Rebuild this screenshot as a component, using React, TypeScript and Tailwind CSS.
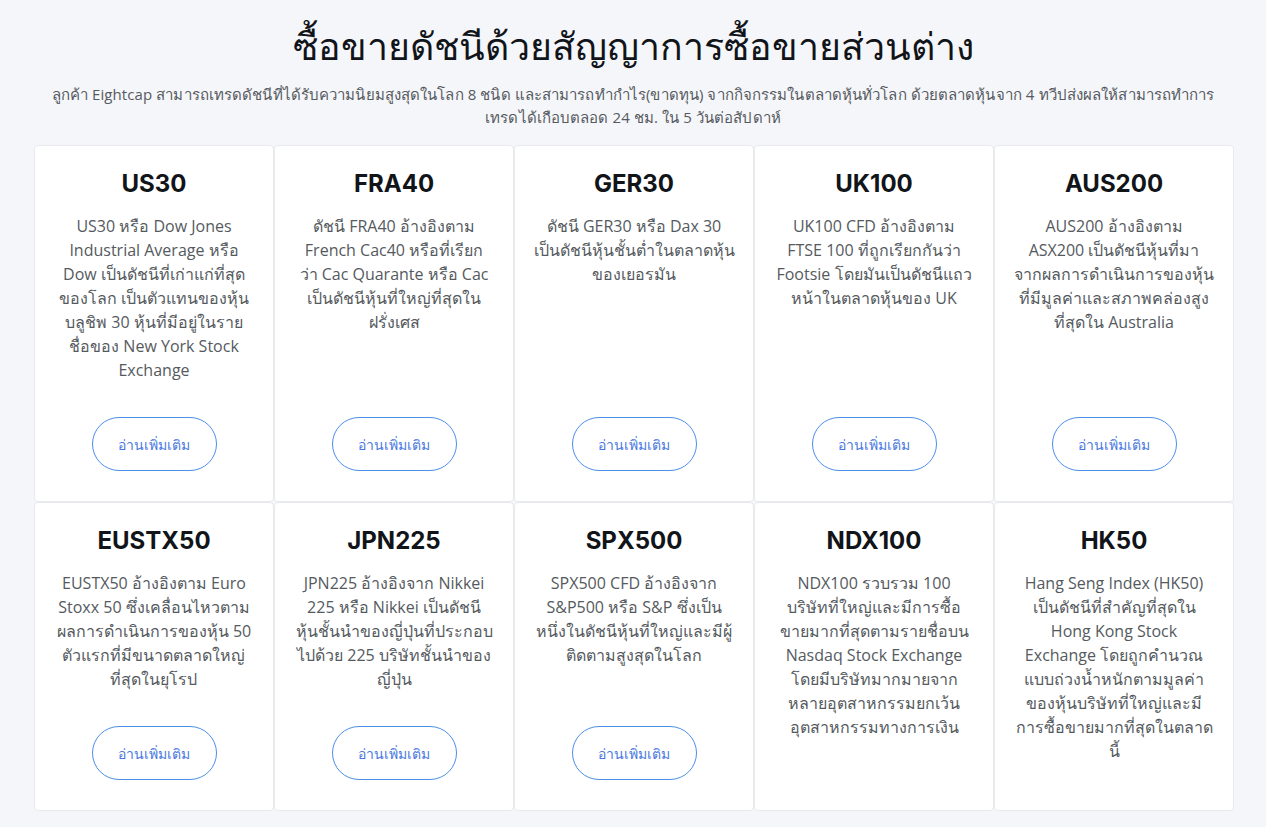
const indices = [
  {
    name: "US30",
    lines: [
      "US30 หรือ Dow Jones",
      "Industrial Average หรือ",
      "Dow เป็นดัชนีที่เก่าแก่ที่สุด",
      "ของโลก เป็นตัวแทนของหุ้น",
      "บลูชิพ 30 หุ้นที่มีอยู่ในราย",
      "ชื่อของ New York Stock",
      "Exchange",
    ],
    button: true,
  },
  {
    name: "FRA40",
    lines: [
      "ดัชนี FRA40 อ้างอิงตาม",
      "French Cac40 หรือที่เรียก",
      "ว่า Cac Quarante หรือ Cac",
      "เป็นดัชนีหุ้นที่ใหญ่ที่สุดใน",
      "ฝรั่งเศส",
    ],
    button: true,
  },
  {
    name: "GER30",
    lines: ["ดัชนี GER30 หรือ Dax 30", "เป็นดัชนีหุ้นชั้นต่ำในตลาดหุ้น", "ของเยอรมัน"],
    button: true,
  },
  {
    name: "UK100",
    lines: [
      "UK100 CFD อ้างอิงตาม",
      "FTSE 100 ที่ถูกเรียกกันว่า",
      "Footsie โดยมันเป็นดัชนีแถว",
      "หน้าในตลาดหุ้นของ UK",
    ],
    button: true,
  },
  {
    name: "AUS200",
    lines: [
      "AUS200 อ้างอิงตาม",
      "ASX200 เป็นดัชนีหุ้นที่มา",
      "จากผลการดำเนินการของหุ้น",
      "ที่มีมูลค่าและสภาพคล่องสูง",
      "ที่สุดใน Australia",
    ],
    button: true,
  },
  {
    name: "EUSTX50",
    lines: [
      "EUSTX50 อ้างอิงตาม Euro",
      "Stoxx 50 ซึ่งเคลื่อนไหวตาม",
      "ผลการดำเนินการของหุ้น 50",
      "ตัวแรกที่มีขนาดตลาดใหญ่",
      "ที่สุดในยุโรป",
    ],
    button: true,
  },
  {
    name: "JPN225",
    lines: [
      "JPN225 อ้างอิงจาก Nikkei",
      "225 หรือ Nikkei เป็นดัชนี",
      "หุ้นชั้นนำของญี่ปุ่นที่ประกอบ",
      "ไปด้วย 225 บริษัทชั้นนำของ",
      "ญี่ปุ่น",
    ],
    button: true,
  },
  {
    name: "SPX500",
    lines: [
      "SPX500 CFD อ้างอิงจาก",
      "S&P500 หรือ S&P ซึ่งเป็น",
      "หนึ่งในดัชนีหุ้นที่ใหญ่และมีผู้",
      "ติดตามสูงสุดในโลก",
    ],
    button: true,
  },
  {
    name: "NDX100",
    lines: [
      "NDX100 รวบรวม 100",
      "บริษัทที่ใหญ่และมีการซื้อ",
      "ขายมากที่สุดตามรายชื่อบน",
      "Nasdaq Stock Exchange",
      "โดยมีบริษัทมากมายจาก",
      "หลายอุตสาหกรรมยกเว้น",
      "อุตสาหกรรมทางการเงิน",
    ],
    button: false,
  },
  {
    name: "HK50",
    lines: [
      "Hang Seng Index (HK50)",
      "เป็นดัชนีที่สำคัญที่สุดใน",
      "Hong Kong Stock",
      "Exchange โดยถูกคำนวณ",
      "แบบถ่วงน้ำหนักตามมูลค่า",
      "ของหุ้นบริษัทที่ใหญ่และมี",
      "การซื้อขายมากที่สุดในตลาด",
      "นี้",
    ],
    button: false,
  },
];

const App = () => {
  return (
    <div className="min-h-screen bg-[#f5f6fa] font-['Open_Sans',sans-serif] overflow-hidden">
      <div className="max-w-[1200px] mx-auto pt-[18px] pb-4">
        <h1 className="text-center text-[37.5px] leading-[56px] text-[#111418]">
          ซื้อขายดัชนีด้วยสัญญาการซื้อขายส่วนต่าง
        </h1>
        <p className="mt-[9px] text-center text-[15px] leading-[23px] text-[#555a60] px-[16px] tracking-[0.1px]">
          ลูกค้า Eightcap สามารถเทรดดัชนีที่ได้รับความนิยมสูงสุดในโลก 8 ชนิด และสามารถทำกำไร(ขาดทุน) จากกิจกรรมในตลาดหุ้นทั่วโลก ด้วยตลาดหุ้นจาก 4 ทวีปส่งผลให้สามารถทำการ
          <br />
          เทรดได้เกือบตลอด 24 ชม. ใน 5 วันต่อสัปดาห์
        </p>
        <div className="mt-[16px] ml-px w-[1200px] grid grid-cols-5">
          {indices.map((item) => (
            <div
              key={item.name}
              className="flex flex-col items-center bg-white border border-[#e9eaee] rounded-[4px] px-[16px] pt-[22px] pb-[30px]"
            >
              <h3 className="text-[24px] leading-[32px] font-bold text-[#111418] font-['Inter',sans-serif]">
                {item.name}
              </h3>
              <p className="mt-[14px] mb-4 flex-1 text-center text-[16px] leading-[24px] text-[#555a60] whitespace-nowrap">
                {item.lines.map((line, i) => (
                  <span key={i}>
                    {line}
                    {i < item.lines.length - 1 && <br />}
                  </span>
                ))}
              </p>
              {item.button && (
                <button className="mt-[19px] w-[125px] h-[54px] rounded-full border border-[#4a8fe8] text-[14px] text-[#4a78e0]">
                  อ่านเพิ่มเติม
                </button>
              )}
            </div>
          ))}
        </div>
      </div>
    </div>
  );
};

export default App;
